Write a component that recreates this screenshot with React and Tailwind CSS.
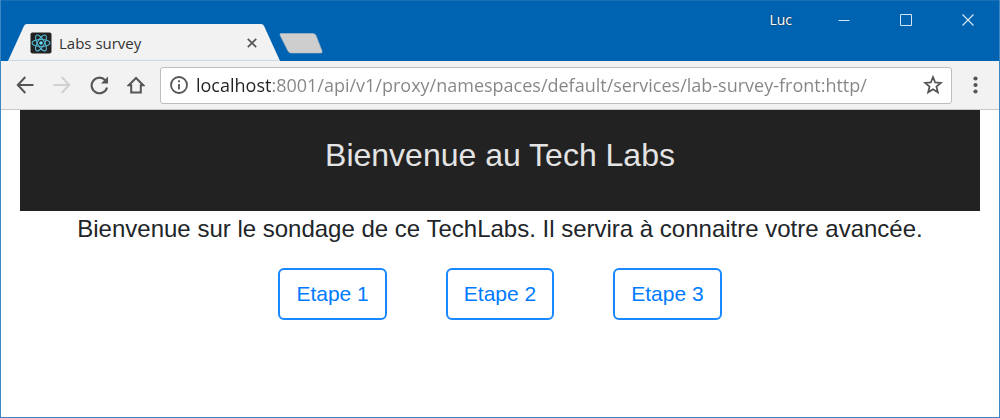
const iconButton = 'flex h-9 w-[37px] shrink-0 items-center justify-center';
const windowButton = 'flex h-10 w-[62px] items-center justify-center text-[#d5e5f3]';
const steps = ['Etape 1', 'Etape 2', 'Etape 3'];

function ReactLogo() {
  return (
    <svg width="22" height="22" viewBox="0 0 22 22" fill="none" aria-hidden="true">
      <rect x="0.5" y="0.5" width="21" height="21" rx="2" fill="#222" />
      <g stroke="#53b9d5" strokeWidth="1.1">
        <ellipse cx="11" cy="11" rx="9" ry="3.5" />
        <ellipse cx="11" cy="11" rx="9" ry="3.5" transform="rotate(60 11 11)" />
        <ellipse cx="11" cy="11" rx="9" ry="3.5" transform="rotate(120 11 11)" />
      </g>
      <circle cx="11" cy="11" r="1.8" fill="#61dafb" />
    </svg>
  );
}

function TitleBar() {
  return (
    <header className="flex h-[61px] items-start bg-[#0063b1] shadow-[inset_0_1px_0_#1a70b6]">
      <div className="relative mt-6 ml-[7px] flex h-[37px] w-[273px] items-center pl-[22px]">
        <svg className="absolute inset-0" width="273" height="37" viewBox="0 0 274 37" aria-hidden="true">
          <path d="M0 37 L16 2 Q17 0 19 0 H254 Q256 0 257 2 L273 37 Z" fill="#f2f2f2" />
          <path d="M1 36.5 H272" stroke="#c3daeb" />
        </svg>
        <span className="relative"><ReactLogo /></span>
        <span className="relative ml-[7px] flex-1 text-[15px] leading-6 text-[#333]">Labs survey</span>
        <button aria-label="Close tab" className="relative mr-[17px] flex size-6 items-center justify-center">
          <svg width="10" height="10" viewBox="0 0 10 10" stroke="#555" strokeWidth="1.7" aria-hidden="true">
            <path d="M.8.8 9.2 9.2M9.2.8.8 9.2" />
          </svg>
        </button>
      </div>
      <button aria-label="New tab" className="mt-[33px] -ml-[2px]">
        <svg className="block" width="44" height="21" viewBox="0 0 44 21" aria-hidden="true">
          <path d="M2 .5H34Q36 .5 37 2.5L43 18Q43.5 20 42 20H12Q10 20 9 18L1 2Q.5.5 2 .5Z" fill="#cecece" stroke="#b4bcc2" strokeWidth=".6" />
        </svg>
      </button>
      <div className="ml-auto flex">
        <button className="mr-[21px] h-10 text-sm font-medium text-white [text-shadow:0_0_2px_#222]">Luc</button>
        <button aria-label="Minimize" className={windowButton}>
          <svg width="12" height="12" viewBox="0 0 12 12" stroke="currentColor" aria-hidden="true"><path d="M.5 6.5H11.5" /></svg>
        </button>
        <button aria-label="Maximize" className={windowButton}>
          <svg width="12" height="12" viewBox="0 0 12 12" fill="none" stroke="currentColor" aria-hidden="true"><path d="M.5.5H11.5V11.5H.5Z" /></svg>
        </button>
        <button aria-label="Close" className={windowButton}>
          <svg width="12" height="12" viewBox="0 0 12 12" stroke="currentColor" strokeWidth="1.2" aria-hidden="true"><path d="M.5.5 11.5 11.5M11.5.5.5 11.5" /></svg>
        </button>
      </div>
    </header>
  );
}

function Toolbar() {
  return (
    <nav className="flex h-[49px] items-center border-b border-[#c8c8c8] bg-[#f2f2f2] pl-[5px] text-[#555]">
      <button aria-label="Back" className={iconButton}>
        <svg width="18" height="18" viewBox="0 0 18 18" fill="none" stroke="currentColor" strokeWidth="2" aria-hidden="true"><path d="M9.3 1 1.8 9 9.3 17M2 9H17.5" /></svg>
      </button>
      <button aria-label="Forward" disabled className={iconButton}>
        <svg width="18" height="18" viewBox="0 0 18 18" fill="none" stroke="#d0d0d0" strokeWidth="2" aria-hidden="true"><path d="M8.7 1 16.2 9 8.7 17M16 9H.5" /></svg>
      </button>
      <button aria-label="Reload" className={iconButton}>
        <svg width="20" height="20" viewBox="0 0 20 20" fill="none" aria-hidden="true">
          <path d="M16.2 5.2A7.8 7.8 0 1 0 18 12.4" stroke="currentColor" strokeWidth="2.1" />
          <path d="M19 1.5V8.5H12Z" fill="currentColor" />
        </svg>
      </button>
      <button aria-label="Home" className={iconButton}>
        <svg width="18" height="18" viewBox="0 0 18 18" fill="none" stroke="currentColor" strokeWidth="2" aria-hidden="true"><path d="M9 2 1.7 9.2H4.2V16.5H13.8V9.2H16.3Z" /></svg>
      </button>
      <div className="ml-[6px] flex h-[37px] flex-1 items-center rounded-[3px] border border-[#bdbdbd] bg-white pl-2">
        <button aria-label="Site information" className="mr-[7px] shrink-0">
          <svg width="20" height="20" viewBox="0 0 20 20" fill="none" aria-hidden="true">
            <circle cx="10" cy="10" r="8" stroke="currentColor" strokeWidth="1.8" />
            <path d="M10 9V14.5M10 5.3V7.3" stroke="currentColor" strokeWidth="1.8" />
          </svg>
        </button>
        <input
          aria-label="Address"
          defaultValue="localhost:8001/api/v1/proxy/namespaces/default/services/lab-survey-front:http/"
          className="min-w-0 flex-1 bg-[linear-gradient(to_right,#222_75px,#858585_75px)] bg-clip-text text-lg leading-7 text-transparent outline-none"
        />
        <button aria-label="Bookmark this page" className="mr-2 shrink-0">
          <svg width="20" height="20" viewBox="0 0 19 19" fill="none" stroke="currentColor" strokeWidth="1.7" aria-hidden="true">
            <path d="M9.5 2 11.6 7.1 17 7.5 12.8 11.1 14.1 16.5 9.5 13.6 4.9 16.5 6.2 11.1 2 7.5 7.4 7.1Z" />
          </svg>
        </button>
      </div>
      <button aria-label="Menu" className="flex h-9 w-[47px] items-center justify-center">
        <svg width="5" height="18" viewBox="0 0 5 18" fill="currentColor" aria-hidden="true"><circle cx="2.5" cy="2.5" r="2.1" /><circle cx="2.5" cy="9" r="2.1" /><circle cx="2.5" cy="15.5" r="2.1" /></svg>
      </button>
    </nav>
  );
}

export default function App() {
  return (
    <div className="flex min-h-screen flex-col border border-t-0 border-[#3f86c4] bg-white font-['Open_Sans',sans-serif]">
      <TitleBar />
      <Toolbar />
      <main className="mx-[19px] text-center font-['Liberation_Sans',Arial,sans-serif]">
        <div className="bg-[#222] px-5 pt-[25px] pb-9">
          <h1 className="text-[32px] leading-10 text-[#e4e4e4]">Bienvenue au Tech Labs</h1>
        </div>
        <p className="text-2xl leading-9 text-[#212529]">Bienvenue sur le sondage de ce TechLabs. Il servira à connaitre votre avancée.</p>
        <div className="mt-[21px] flex flex-wrap justify-center gap-[59px]">
          {steps.map((step) => (
            <button key={step} className="h-[52px] rounded-md border-2 border-[#1a88ff] px-4 text-[21px] leading-8 text-[#007bff]">{step}</button>
          ))}
        </div>
      </main>
    </div>
  );
}
